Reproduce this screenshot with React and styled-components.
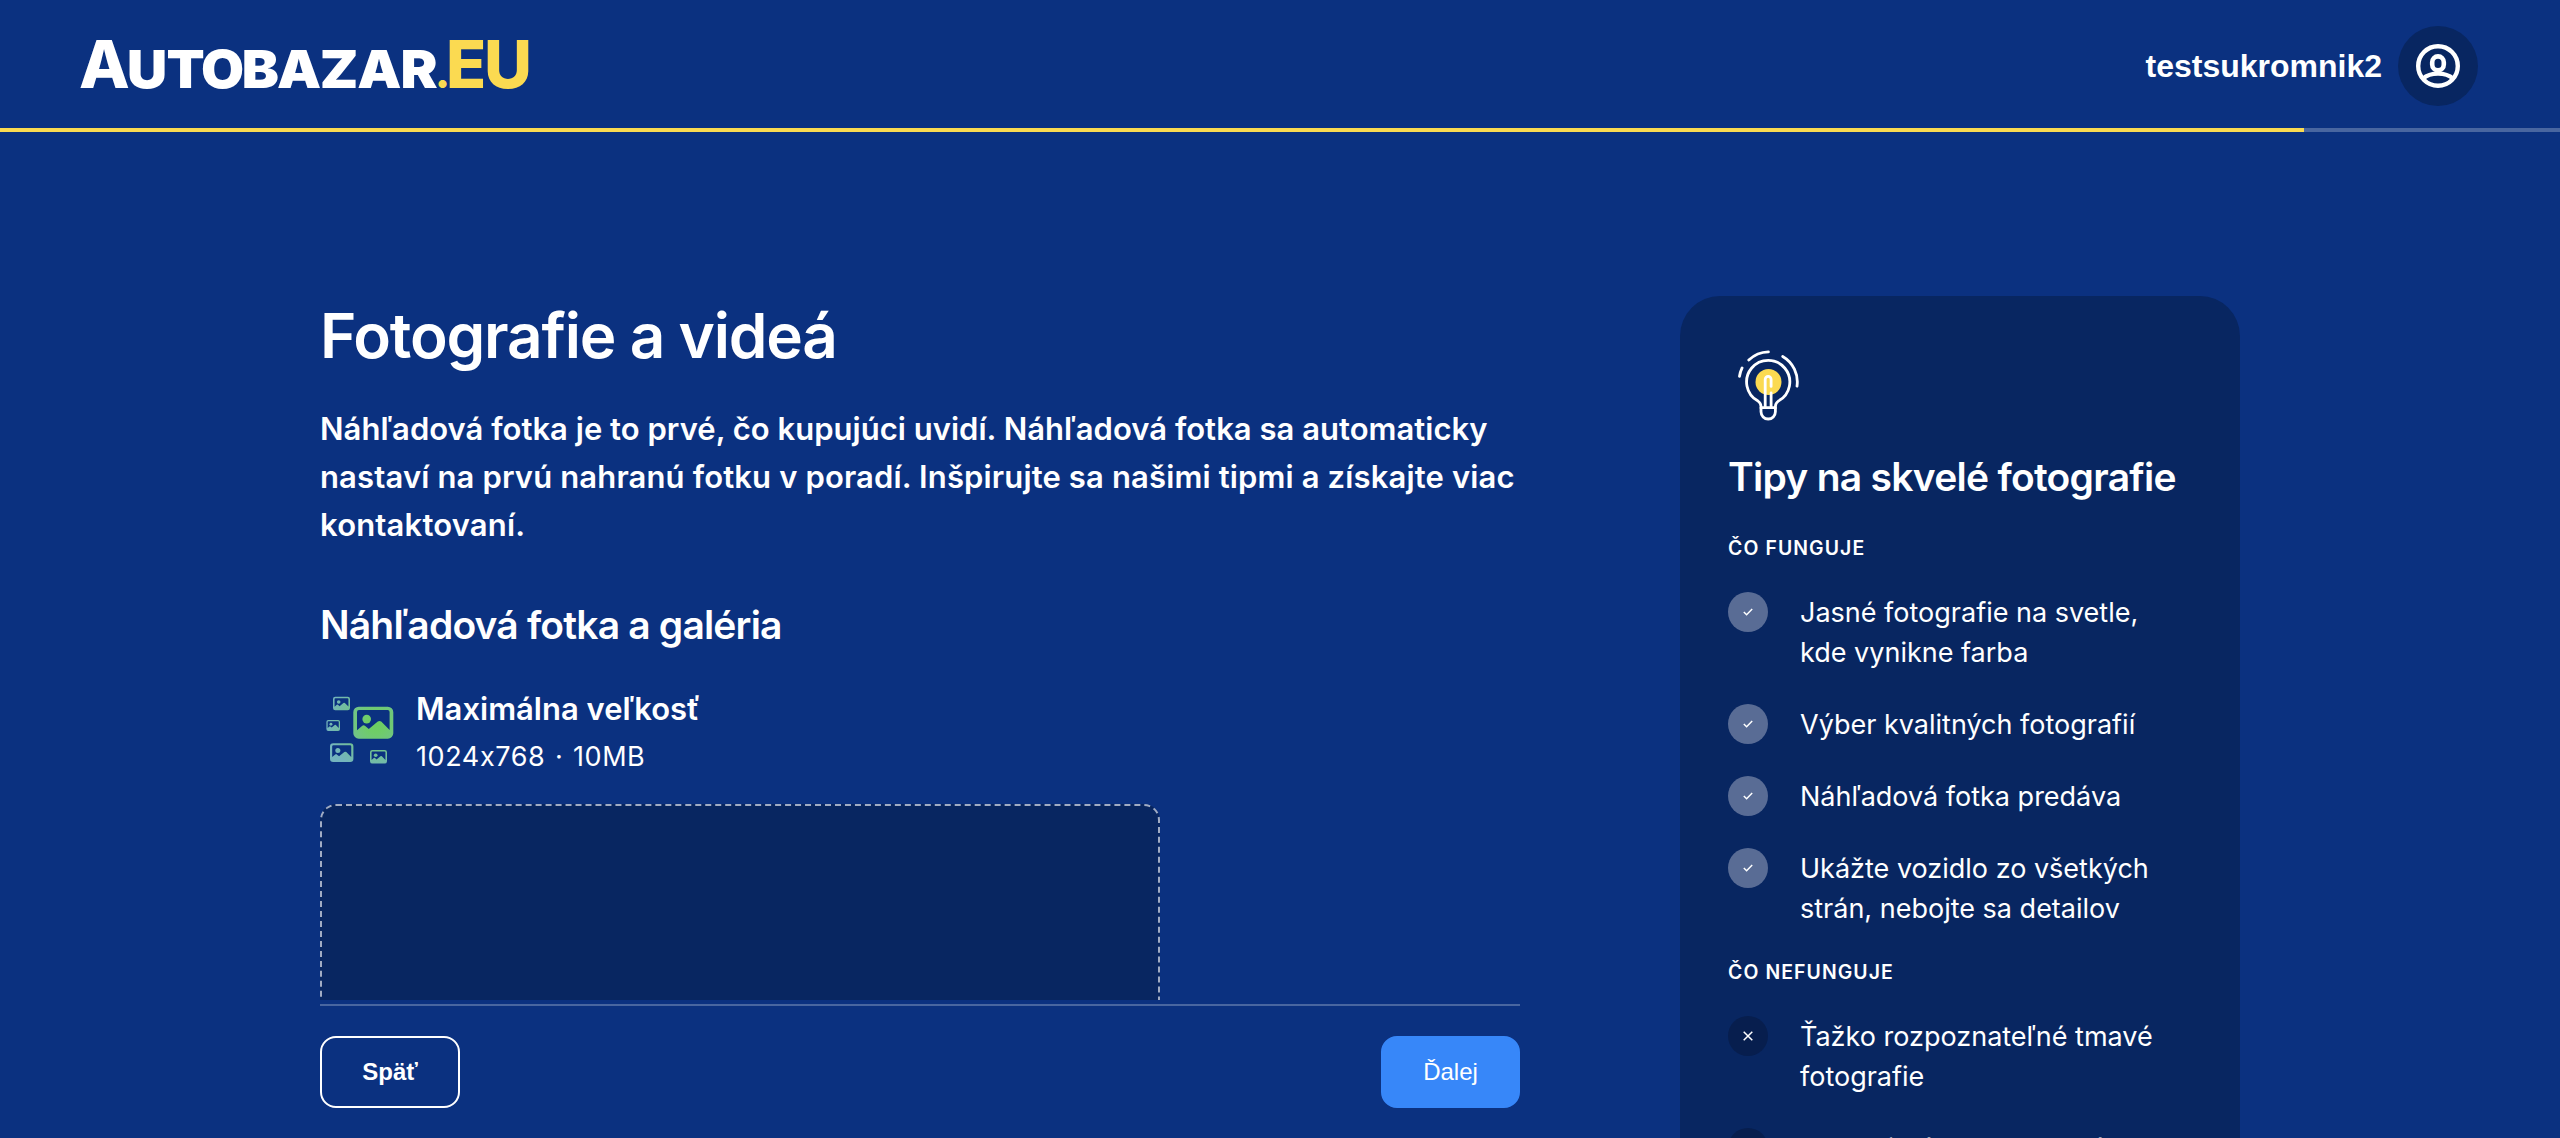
import React from "react";
import styled, { createGlobalStyle } from "styled-components";

const color = {
  page: "#0b3180",
  panel: "#082661",
  yellow: "#fbda51",
  line: "#4966a0",
  primary: "#3787f9",
};

const GlobalStyle = createGlobalStyle`
  *, *::before, *::after { box-sizing: border-box; }
  html, body { margin: 0; background: ${color.page}; }
  h1, h2, h3, p, ul { margin: 0; padding: 0; }
  svg { display: block; }
`;

const Page = styled.div`
  height: 100vh;
  overflow: hidden;
  display: flex;
  flex-direction: column;
  background: ${color.page};
  color: #fff;
  font-family: Inter, "Liberation Sans", sans-serif;
  font-feature-settings: "calt" 0;
`;

const Header = styled.header`
  flex: none;
  height: 128px;
  padding: 4px 82px 0 80px;
  display: flex;
  align-items: center;
  justify-content: space-between;
`;

const LogoText = styled.text`
  font-family: Inter, sans-serif;
  font-weight: ${(p) => p.$weight || 800};
  font-size: ${(p) => p.$size}px;
  fill: ${(p) => p.$fill};
  text-anchor: middle;
`;

const User = styled.div`
  display: flex;
  align-items: center;
  gap: 16px;
`;

const UserName = styled.span`
  font: 700 32px/40px "Liberation Sans", Arial, sans-serif;
`;

const Avatar = styled.div`
  width: 80px;
  height: 80px;
  border-radius: 50%;
  background: ${color.panel};
  display: grid;
  place-items: center;
`;

const Progress = styled.div`
  flex: none;
  height: 4px;
  background: ${color.line};
`;

const ProgressFill = styled.div`
  height: 100%;
  width: 90%;
  background: ${color.yellow};
`;

const Content = styled.div`
  flex: 1;
  min-height: 0;
  padding: 164px 320px 0;
  display: flex;
  align-items: flex-start;
  justify-content: space-between;
`;

const MainColumn = styled.main`
  width: 1200px;
  height: 100%;
  display: flex;
  flex-direction: column;
`;

const Scroll = styled.div`
  flex: 1;
  min-height: 0;
  overflow: hidden;
`;

const Title = styled.h1`
  font-size: 62px;
  line-height: 79px;
  font-weight: 600;
  letter-spacing: -1.18px;
`;

const Lead = styled.p`
  margin-top: 30px;
  font-size: 31px;
  line-height: 48px;
  font-weight: 600;
`;

const LeadLine = styled.span`
  display: block;
  white-space: nowrap;
  letter-spacing: ${(p) => p.$tracking}px;
`;

const SectionTitle = styled.h2`
  margin-top: ${(p) => p.$top}px;
  font-size: 39px;
  line-height: 48px;
  font-weight: 600;
  letter-spacing: ${(p) => p.$tracking}px;
  white-space: nowrap;
`;

const Limits = styled.div`
  margin-top: 36px;
  display: flex;
  gap: 16px;
`;

const LimitTitle = styled.div`
  font-size: 31px;
  line-height: 48px;
  font-weight: 600;
`;

const LimitValue = styled.div`
  margin-top: 4px;
  font-size: 27px;
  line-height: 40px;
  letter-spacing: 0.6px;
  word-spacing: 1.4px;
`;

const DropZone = styled.div`
  margin-top: 27px;
  width: 840px;
  height: 400px;
  border: 2px dashed rgba(255, 255, 255, 0.62);
  border-radius: 16px;
  background: ${color.panel};
`;

const Footer = styled.footer`
  flex: none;
  height: 134px;
  margin-top: 4px;
  padding-top: 30px;
  border-top: 2px solid ${color.line};
  display: flex;
  align-items: flex-start;
  justify-content: space-between;
`;

const Button = styled.button`
  width: ${(p) => (p.$primary ? 139 : 140)}px;
  height: 72px;
  padding: 0;
  border: 2px solid ${(p) => (p.$primary ? color.primary : "#fff")};
  border-radius: 16px;
  background: ${(p) => (p.$primary ? color.primary : "transparent")};
  color: #fff;
  font: ${(p) => (p.$primary ? 400 : 700)} 24px "Liberation Sans", Arial, sans-serif;
`;

const Tips = styled.aside`
  width: 560px;
  padding: 48px;
  border-radius: 40px;
  background: ${color.panel};
`;

const TipsHeading = styled.h3`
  margin: ${(p) => p.$top}px 0 28px;
  font-size: 19.4px;
  line-height: 32px;
  font-weight: 600;
  letter-spacing: 1.1px;
`;

const TipList = styled.ul`
  list-style: none;
  display: flex;
  flex-direction: column;
  gap: 32px;
`;

const Tip = styled.li`
  display: flex;
  gap: 32px;
`;

const TipMark = styled.span`
  flex: none;
  width: 40px;
  height: 40px;
  border-radius: 50%;
  background: ${(p) => (p.$good ? "#596c95" : "#071e4e")};
  display: grid;
  place-items: center;
`;

const TipText = styled.span`
  padding-top: 1px;
  margin-bottom: -1px;
  font-size: 27px;
  line-height: 40px;
`;

function Logo() {
  return (
    <svg width="452" height="52" viewBox="0 0 452 52" overflow="visible">
      <LogoText $size={66} $fill="#fff" x="24.5" y="48">A</LogoText>
      <g transform="scale(1.07 1)">
        <LogoText
          $size={52}
          $weight={900}
          $fill="#fff"
          x="62.6 98.6 133.3 168.6 204.7 242.1 279.8 316.8"
          y="48"
        >
          UTOBAZAR
        </LogoText>
      </g>
      <LogoText $size={44} $fill={color.yellow} x="362.5" y="48">.</LogoText>
      <LogoText $size={66} $fill={color.yellow} x="386.2 428" y="48">EU</LogoText>
    </svg>
  );
}

function PersonIcon() {
  return (
    <svg width="44" height="44" viewBox="0 0 44 44" fill="none" stroke="#fff" strokeWidth="4.4">
      <circle cx="22" cy="22" r="19.8" />
      <rect x="16.2" y="12.4" width="11.6" height="13.8" rx="5.8" strokeWidth="4.6" />
      <path d="M7 34.6C11 31 16 29.6 22 29.6S33 31 37 34.6" strokeWidth="4.2" />
    </svg>
  );
}

const pictures = [
  { x: 33.3, y: 21.7, s: 1 },
  { x: 13, y: 11.7, s: 0.425 },
  { x: 6.4, y: 35, s: 0.34 },
  { x: 10, y: 58.3, s: 0.585 },
  { x: 50, y: 65, s: 0.425 },
];

function PicturesIcon() {
  return (
    <svg width="80" height="92" viewBox="0 0 80 92">
      <defs>
        {pictures.map(({ x, y, s }, i) => (
          <radialGradient
            key={i}
            id={`glow${i}`}
            gradientUnits="userSpaceOnUse"
            cx={(56 - x) / s}
            cy={(38 - y) / s}
            r={50 / s}
          >
            <stop offset="0" stopColor="#6dcf60" />
            <stop offset="0.2" stopColor="#6fcd68" />
            <stop offset="1" stopColor="#74b4be" />
          </radialGradient>
        ))}
      </defs>
      {pictures.map(({ x, y, s }, i) => (
        <g key={i} transform={`translate(${x} ${y}) scale(${s})`} fill={`url(#glow${i})`}>
          <path
            fillRule="evenodd"
            d="M5.5 0h29A5.5 5.5 0 0 1 40 5.500v21a5.500 5.500 0 0 1-5.500 5.500h-29A5.500 5.500 0 0 1 0 26.500v-21A5.500 5.500 0 0 1 5.500 0ZM5.700 3.400A2 2 0 0 0 3.700 5.400V23.600L9 19q1.300-1 2.600 0l3.900 3.200L24.500 14.900q1.700-1.300 3.400 0L36.300 23.300V5.400a2 2 0 0 0-2-2Z"
          />
          <circle cx="13.4" cy="12.4" r="4.3" />
        </g>
      ))}
    </svg>
  );
}

function BulbIcon() {
  return (
    <svg
      width="80"
      height="80"
      viewBox="0 0 80 80"
      fill="none"
      stroke="#fff"
      strokeWidth="2.8"
      strokeLinecap="round"
      strokeLinejoin="round"
    >
      <circle cx="40.5" cy="38" r="13" fill={color.yellow} stroke="none" />
      <path d="M33 64v-1.500c0-2.500-1-4-3-5.500A21.600 21.600 0 1 1 50.400 57c-2 1.500-3 3-3 5.500V64" />
      <path d="M33 63.700h14.400v4.100a7.200 7.200 0 0 1-14.400 0Z" />
      <path d="M37.200 62.500V35.400a2.950 2.950 0 0 1 5.900 0V42.400M43.100 49v13.500" />
      <path d="M20.800 16.100A29.400 29.400 0 0 1 40.400 7.900M11.500 32.300A29.400 29.400 0 0 1 14.100 23.900M54.700 12.500A29.400 29.400 0 0 1 69 42.200" />
    </svg>
  );
}

function CheckIcon() {
  return (
    <svg width="10" height="8" viewBox="0 0 10 8" fill="none" stroke="#fff" strokeWidth="1.5">
      <path d="M0.800 4L3.600 6.700L9.200 1" />
    </svg>
  );
}

function CrossIcon() {
  return (
    <svg width="10" height="10" viewBox="0 0 10 10" fill="none" stroke="#fff" strokeWidth="1.5">
      <path d="M0.700 0.700L9.300 9.300M9.300 0.700L0.700 9.300" />
    </svg>
  );
}

const works = [
  "Jasné fotografie na svetle, kde vynikne farba",
  "Výber kvalitných fotografií",
  "Náhľadová fotka predáva",
  "Ukážte vozidlo zo všetkých strán, nebojte sa detailov",
];

const fails = [
  "Ťažko rozpoznateľné tmavé fotografie",
  "Nekvalitné a rozmazané fotografie",
];

function Tips_({ items, good }) {
  return (
    <TipList>
      {items.map((text) => (
        <Tip key={text}>
          <TipMark $good={good}>{good ? <CheckIcon /> : <CrossIcon />}</TipMark>
          <TipText>{text}</TipText>
        </Tip>
      ))}
    </TipList>
  );
}

export default function App() {
  return (
    <Page>
      <GlobalStyle />
      <Header>
        <Logo />
        <User>
          <UserName>testsukromnik2</UserName>
          <Avatar>
            <PersonIcon />
          </Avatar>
        </User>
      </Header>
      <Progress>
        <ProgressFill />
      </Progress>
      <Content>
        <MainColumn>
          <Scroll>
            <Title>Fotografie a videá</Title>
            <Lead>
              <LeadLine $tracking={0.02}>
                Náhľadová fotka je to prvé, čo kupujúci uvidí. Náhľadová fotka sa automaticky
              </LeadLine>
              <LeadLine $tracking={0.14}>
                nastaví na prvú nahranú fotku v poradí. Inšpirujte sa našimi tipmi a získajte viac
              </LeadLine>
              <LeadLine $tracking={0.18}>kontaktovaní.</LeadLine>
            </Lead>
            <SectionTitle $top={52} $tracking={-0.82}>
              Náhľadová fotka a galéria
            </SectionTitle>
            <Limits>
              <PicturesIcon />
              <div>
                <LimitTitle>Maximálna veľkosť</LimitTitle>
                <LimitValue>1024x768 · 10MB</LimitValue>
              </div>
            </Limits>
            <DropZone />
          </Scroll>
          <Footer>
            <Button>Späť</Button>
            <Button $primary>Ďalej</Button>
          </Footer>
        </MainColumn>
        <Tips>
          <BulbIcon />
          <SectionTitle $top={29} $tracking={-0.74}>
            Tipy na skvelé fotografie
          </SectionTitle>
          <TipsHeading $top={31}>ČO FUNGUJE</TipsHeading>
          <Tips_ items={works} good />
          <TipsHeading $top={28}>ČO NEFUNGUJE</TipsHeading>
          <Tips_ items={fails} />
        </Tips>
      </Content>
    </Page>
  );
}
